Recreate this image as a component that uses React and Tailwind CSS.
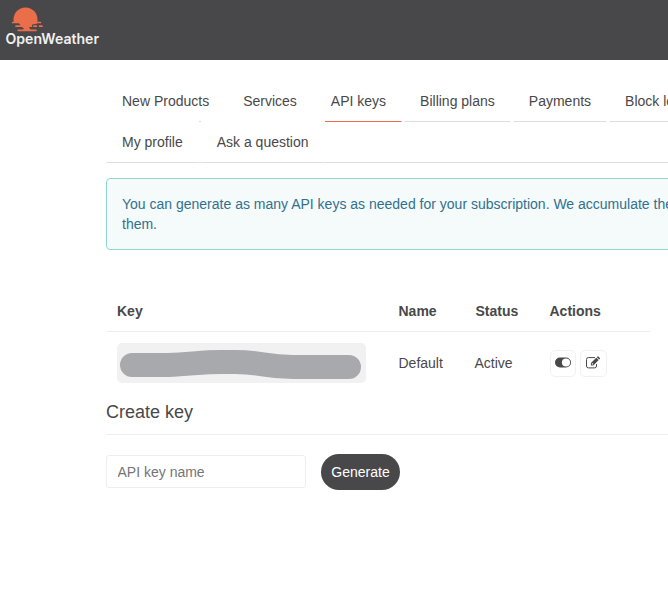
import React from "react";

const tabs = ["New Products", "Services", "API keys", "Billing plans", "Payments", "Block logs", "My profile", "Ask a question"];

function Logo() {
  return (
    <svg width="120" height="60" viewBox="0 0 120 60" className="block" aria-label="OpenWeather">
      <path d="M13.9 22.5 A12 12 0 1 1 37.1 22.5 Z" fill="#eb6e4b" />
      <g stroke="#eb6e4b" strokeWidth="1.7" strokeLinecap="round">
        <path d="M12.6 22.5H40.4M16 26.2H31.4M34 26.2H36.3M39.6 26.2H42M18.2 30.3H36" />
      </g>
      <path d="M18 22h19v1.6l-4.5 1-2 2-1.5 1 2 2.6h-8.5l1.5-1.8-3-2-1-2z" fill="#eb6e4b" />
      <text x="5.5" y="43.7" fontSize="14.5" fontWeight="600" fill="#f0f0f0" fontFamily="Inter, sans-serif" textLength="93.5" lengthAdjust="spacingAndGlyphs">OpenWeather</text>
    </svg>
  );
}

function ToggleIcon() {
  return (
    <svg width="16" height="14" viewBox="0 0 16 14" className="block">
      <rect x="0" y="1.5" width="16" height="10" rx="5" fill="#48484a" />
      <circle cx="11" cy="6.5" r="4.1" fill="#fff" />
    </svg>
  );
}

function EditIcon() {
  return (
    <svg width="14" height="14" viewBox="0 0 14 14" className="block -translate-x-px" fill="#48484a">
      <path d="M10.5 8v2a1.9 1.9 0 0 1-1.9 1.9H2.4A1.9 1.9 0 0 1 .5 10V3.5a1.9 1.9 0 0 1 1.9-1.9H9" fill="none" stroke="#48484a" strokeWidth="1" />
      <path fillRule="evenodd" d="M10.3 1.7l2.4 2.4L7.3 9.5H4.9V7.1zM5.8 7.5v1h1l.6-.6-1-1z" />
      <path d="M10.8 1.2l.6-.6q.5-.4 1 0l1.4 1.4q.4.5 0 1l-.6.6z" />
    </svg>
  );
}

const font = "font-['Liberation_Sans',Arial,sans-serif]";

export default function App() {
  return (
    <div className={`h-[596px] w-[668px] overflow-hidden bg-white text-[14px] leading-5 text-[#48484a] ${font}`}>
      <header className="h-[60px] bg-[#48484a]">
        <Logo />
      </header>
      <main className="ml-[106px] w-[660px] pt-5">
        <ul className="flex flex-wrap border-b border-[#ddd]">
          {tabs.map((t) => (
            <li key={t} className="-mb-px">
              <a
                className={`relative mr-0.5 block border border-white bg-white px-[15px] py-2.5 whitespace-nowrap ${
                  t === "API keys" ? "border-b-[#e96e50]" : "border-b-[#ddd]"
                }`}
              >
                {t}
              </a>
            </li>
          ))}
        </ul>
        <div className="mt-[15px] rounded border border-[#90d8ce] bg-[#f5fbfb] p-[15px] whitespace-nowrap text-[#31708f]">
          You can generate as many API keys as needed for your subscription. We accumulate the total load from all of
          <br />
          them.
        </div>
        <div className="mt-[41px] w-[544px]">
          <div className="grid h-[41px] grid-cols-[281.5px_76px_75px_1fr] items-center border-b border-[#eee] pl-[11px] font-bold">
            <span>Key</span>
            <span>Name</span>
            <span className="pl-px">Status</span>
            <span>Actions</span>
          </div>
          <div className="grid grid-cols-[281.5px_76px_75.5px_1fr] items-center pt-[11px] pl-[11px]">
            <div className="h-10 w-[249px] rounded-[5px] bg-[#f1f1f1]">
              <svg width="249" height="40" viewBox="0 0 249 40" className="block">
                <path
                  d="M15 22H51C75 21 85 19 104 19H118C146 19 146 24 176 24H232"
                  fill="none"
                  stroke="#a8a9ac"
                  strokeWidth="24"
                  strokeLinecap="round"
                />
              </svg>
            </div>
            <span>Default</span>
            <span>Active</span>
            <div className="flex gap-1">
              <button className="flex h-[27px] w-[26px] items-center justify-center rounded-[5px] border border-[#f1f1f1]">
                <ToggleIcon />
              </button>
              <button className="flex h-[27px] w-[27px] items-center justify-center rounded-[5px] border border-[#f1f1f1]">
                <EditIcon />
              </button>
            </div>
          </div>
        </div>
        <h4 className="mt-[19px] h-[33px] border-b border-[#eee] text-[18px] leading-5">Create key</h4>
        <div className="mt-[19px] flex items-start gap-[15px]">
          <input
            placeholder="API key name"
            className="mt-px h-[33px] w-[200px] rounded-[3px] border border-[#eee] px-[10.5px] pt-px placeholder:text-[#757575]"
          />
          <button className="h-9 w-[79px] rounded-[18px] bg-[#48484a] text-white">Generate</button>
        </div>
      </main>
    </div>
  );
}
